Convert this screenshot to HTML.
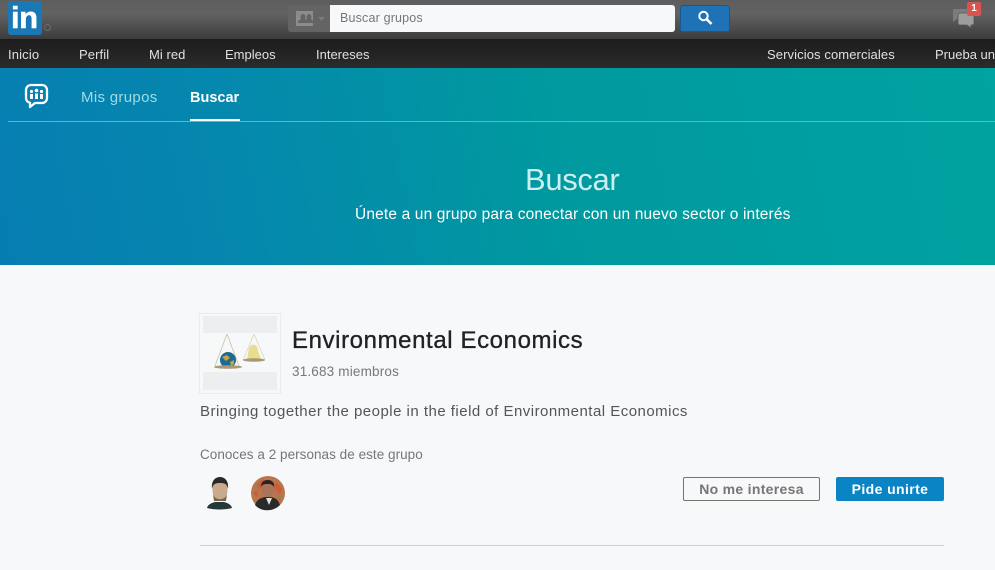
<!DOCTYPE html>
<html lang="es"><head><meta charset="utf-8"><title>Buscar grupos</title>
<style>
html,body{margin:0;padding:0;width:995px;height:570px;overflow:hidden;background:#f6f8fa}
body{position:relative;font-family:"Liberation Sans",sans-serif}
.a{position:absolute;white-space:nowrap}
.n{top:47px;font-size:13px;line-height:15px;color:#e0e0e0}
svg{position:absolute;display:block;overflow:visible}
</style></head><body>
<div class="a" style="left:0;top:0;width:995px;height:39px;background:linear-gradient(#5e5e5e,#626262 35%,#3c3c3c)"></div>
<div class="a" style="left:0;top:39px;width:995px;height:29px;background:linear-gradient(#1c1c1c,#2b2b2b)"></div>

<div class="a" style="left:8px;top:1px;width:34px;height:34px;background:#1a78b4;border-radius:3px"></div>
<div class="a" style="left:11px;top:0;font-size:31px;line-height:36px;font-weight:bold;color:#fff;letter-spacing:-.5px;-webkit-text-stroke:.5px #fff">in</div>
<div class="a" style="left:44px;top:24px;width:5px;height:5px;border:1px solid #6c6c6c;border-radius:50%"></div>

<div class="a" style="left:288px;top:5px;width:42px;height:27px;background:#646464;border-radius:3px 0 0 3px"></div>
<svg style="left:295px;top:10px" width="30" height="18" viewBox="0 0 30 18"><path d="M1 1h17v15H1z" fill="#8c8c8c"/><path d="M3 13c0-3 2-3 3-4-1-2 0-5 2-5s3 3 2 5c1 1 3 1 3 4zM9 13c0-3 2-3 3-4-1-2 0-5 2-5s3 3 2 5c1 1 2 1 2 4z" fill="#646464"/><path d="M23 7h7l-3.500 4z" fill="#7c7c7c"/></svg>
<div class="a" style="left:330px;top:5px;width:345px;height:27px;background:#f6f8fa;border-radius:0 3px 3px 0"></div>
<div class="a" style="left:340px;top:11px;font-size:12.500px;line-height:15px;color:#777;letter-spacing:.17px">Buscar grupos</div>
<div class="a" style="left:680px;top:5px;width:50px;height:27px;background:#1f72b5;border-radius:3px;box-shadow:inset 0 0 0 1px #17598f"></div>
<svg style="left:696px;top:9px" width="18" height="18" viewBox="0 0 18 18"><circle cx="7.500" cy="7" r="4.200" fill="none" stroke="#fff" stroke-width="2"/><path d="M10.800 10.300l4.700 4.700" stroke="#fff" stroke-width="2.600"/></svg>

<svg style="left:952px;top:8px" width="24" height="22" viewBox="0 0 24 22"><path d="M3 1h12a2 2 0 0 1 2 2v8H5l-4 3V3a2 2 0 0 1 2-2z" fill="#7c7c7c"/><path d="M8 5h12a2 2 0 0 1 2 2v8a2 2 0 0 1-2 2h-1v3l-4-3H8a2 2 0 0 1-2-2V7a2 2 0 0 1 2-2z" fill="#9d9d9d" stroke="#555" stroke-width=".8"/></svg>
<div class="a" style="left:967px;top:2px;width:14px;height:14px;background:#d9534f;border-radius:2px;color:#fff;font-size:10px;line-height:14px;font-weight:bold;text-align:center">1</div>

<div class="a n" style="left:8px;letter-spacing:.15px">Inicio</div>
<div class="a n" style="left:79px;letter-spacing:.1px">Perfil</div>
<div class="a n" style="left:149px;letter-spacing:.05px">Mi red</div>
<div class="a n" style="left:225px">Empleos</div>
<div class="a n" style="left:316px">Intereses</div>
<div class="a n" style="left:767px;letter-spacing:.1px">Servicios comerciales</div>
<div class="a n" style="left:935px">Prueba una</div>

<div class="a" style="left:0;top:68px;width:995px;height:197px;background:linear-gradient(78deg,#067db2 0%,#0588ad 25%,#00999f 55%,#00a3a0 100%)"></div>
<div class="a" style="left:8px;top:121px;width:987px;height:1px;background:#4cc0c4"></div>
<svg style="left:24px;top:83px" width="25" height="26" viewBox="0 0 25 26"><path d="M7 2h11a5 5 0 0 1 5 5v8a5 5 0 0 1-5 5h-7l-5 4v-4.200A5 5 0 0 1 2 15V7a5 5 0 0 1 5-5z" fill="none" stroke="#fff" stroke-width="2.300" stroke-linejoin="round"/><circle cx="7.500" cy="8.500" r="1.600" fill="#fff"/><circle cx="12.500" cy="7.500" r="1.800" fill="#fff"/><circle cx="17.500" cy="8.500" r="1.600" fill="#fff"/><path d="M6 11h3v5H6zM11 10.500h3V16h-3zM16 11h3v5h-3z" fill="#fff"/></svg>
<div class="a" style="left:81px;top:89px;font-size:15px;line-height:18px;color:#9fdbe3;letter-spacing:.32px">Mis grupos</div>
<div class="a" style="left:190px;top:89px;font-size:14.500px;line-height:18px;font-weight:bold;color:#fff">Buscar</div>
<div class="a" style="left:190px;top:119px;width:50px;height:2px;background:#fff"></div>
<div class="a" style="left:525px;top:162px;font-size:31px;line-height:36px;color:#cdeeef;letter-spacing:-.35px">Buscar</div>
<div class="a" style="left:355px;top:206px;font-size:15.500px;line-height:18px;color:#fff;letter-spacing:.15px">Únete a un grupo para conectar con un nuevo sector o interés</div>

<div class="a" style="left:200px;top:314px;width:80px;height:79px;background:#f7f8fa;box-shadow:0 0 0 1px #e9ebed"></div>
<div class="a" style="left:203px;top:316px;width:74px;height:17px;background:#eceef0"></div>
<div class="a" style="left:203px;top:372px;width:74px;height:18px;background:#eceef0"></div>
<svg style="left:212px;top:332px" width="58" height="38" viewBox="0 0 58 38">
<path d="M15 2L3 34M15 2l12 32" stroke="#c9bfa6" stroke-width=".8" fill="none"/>
<path d="M42 2L31 28M42 2l11 26" stroke="#dcd6b0" stroke-width=".8" fill="none"/>
<circle cx="16" cy="28" r="8" fill="#1f6a8f"/><path d="M10 25l5-2 3 3-4 3zM18 30l4-2v4l-3 2z" fill="#c2a64a"/>
<ellipse cx="16" cy="35" rx="14" ry="1.800" fill="#a99977"/>
<path d="M37 16c2-3 3-4 5-3 3 0 4 3 4 6l3 8H35z" fill="#e8dc8e"/>
<ellipse cx="42" cy="28" rx="11" ry="1.800" fill="#a99977"/></svg>

<div class="a" style="left:292px;top:326px;font-size:24px;line-height:29px;color:#222;letter-spacing:.6px;-webkit-text-stroke:.35px #222">Environmental Economics</div>
<div class="a" style="left:292px;top:364px;font-size:13.500px;line-height:16px;color:#777;letter-spacing:.18px">31.683 miembros</div>
<div class="a" style="left:200px;top:403px;font-size:15px;line-height:18px;color:#555;letter-spacing:.48px">Bringing together the people in the field of Environmental Economics</div>
<div class="a" style="left:200px;top:447px;font-size:13.500px;line-height:16px;color:#767676;letter-spacing:.04px">Conoces a 2 personas de este grupo</div>

<svg style="left:203px;top:475px" width="84" height="36" viewBox="0 0 84 36">
<path d="M4 33c1-4 5-5 8-6h9c3 1 7 2 8 6-7 2-18 2-25 0z" fill="#26383a"/>
<ellipse cx="17" cy="15" rx="7.500" ry="11" fill="#c9ab8c"/><path d="M9 14c-1-9 4-12 8-12s9 3 8 12c-1-5-3-6-8-6s-7 1-8 6z" fill="#2a2a28"/><path d="M10 19c2 7 12 7 14 0l-1 7H11z" fill="#75654f"/>
<circle cx="65" cy="18" r="17" fill="#b9764c"/><path d="M54 9l6-5 3 3-6 7zM73 7l6 7-2 5-6-6zM50 17l5-1-1 7z" fill="#cf5a3c"/><path d="M75 20l3 1-2 5zM52 12l3-2v4z" fill="#7d8a4c"/>
<path d="M52 30c2-6 6-7 10-8h6c4 1 7 2 9 8-7 7-19 7-25 0z" fill="#2b2a2a"/><path d="M63 23l3 7 3-7z" fill="#dfe3e3"/>
<ellipse cx="65" cy="14" rx="6" ry="8" fill="#a9745a"/><path d="M58 12c0-6 4-7 7-7s7 2 6 7c-2-3-4-3-6-3s-6 0-7 3z" fill="#2b2320"/></svg>

<div class="a" style="left:683px;top:477px;width:135px;height:22px;border:1px solid #77736f;border-radius:2px;text-align:center;font-size:14px;line-height:22px;font-weight:bold;color:#787474;letter-spacing:.3px">No me interesa</div>
<div class="a" style="left:836px;top:477px;width:108px;height:24px;background:#0a84c4;border-radius:2px;text-align:center;font-size:14px;line-height:24px;font-weight:bold;color:#fff;letter-spacing:.4px">Pide unirte</div>
<div class="a" style="left:200px;top:545px;width:744px;height:1px;background:#cfd1d3"></div>
</body></html>
